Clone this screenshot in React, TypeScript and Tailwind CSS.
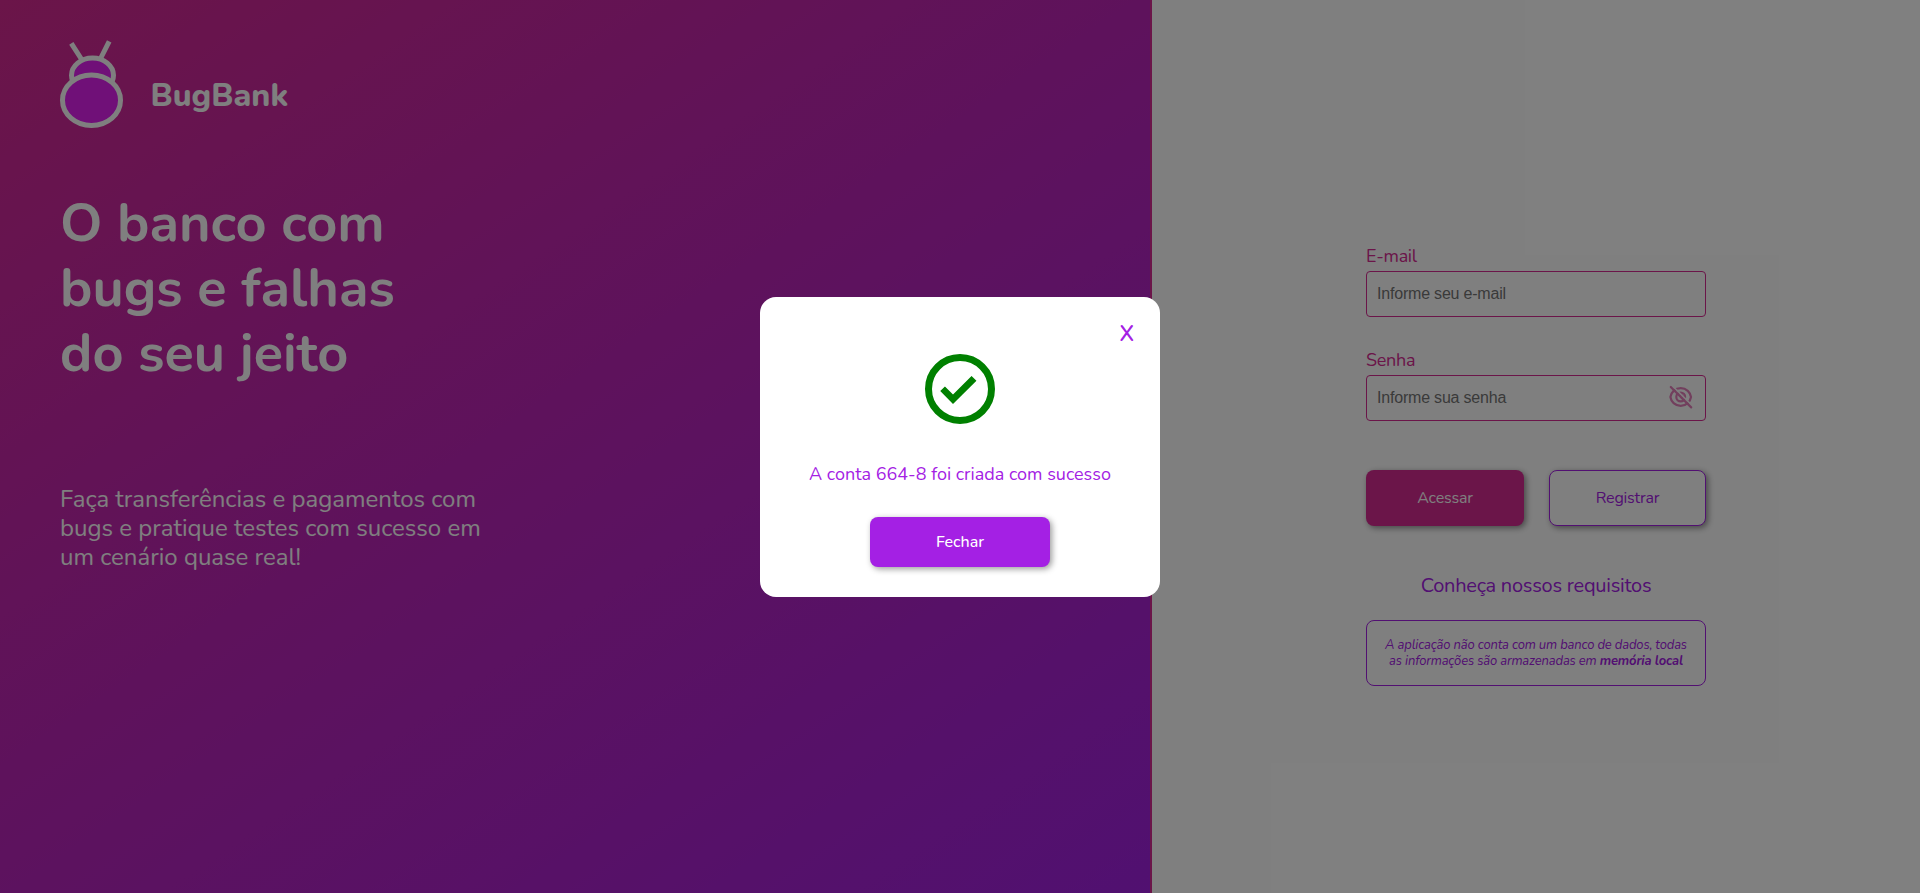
export default function App() {
  return (
    <div className="relative flex h-[893px] w-full overflow-hidden bg-white font-['Nunito',Lato,sans-serif]">
      <section className="flex w-[1152px] shrink-0 flex-col border-r-2 border-[#d62a92] bg-[linear-gradient(146deg,#d62a92_0%,#bd25b8_46%,#a221e2_100%)] px-[60px] pt-10 text-white">
        <div className="flex h-[88px] items-start">
          <svg className="h-[88px] w-16" viewBox="60 40 64 88" fill="none" stroke="white" strokeWidth="5">
            <path d="M71.3 43.3L82 60M109.2 41.3L100.3 59" />
            <ellipse cx="92.5" cy="75.3" rx="21" ry="17.3" fill="#e020f0" />
            <ellipse cx="91.5" cy="100.3" rx="29" ry="25.2" fill="#e020f0" />
          </svg>
          <span className="mt-9 ml-[26.5px] text-[32px] leading-10 font-extrabold">BugBank</span>
        </div>
        <h1 className="mt-[63px] text-[54px] leading-[65px] font-bold">O banco com<br />bugs e falhas<br />do seu jeito</h1>
        <p className="mt-[99px] text-2xl leading-[29px]">Faça transferências e pagamentos com<br />bugs e pratique testes com sucesso em<br />um cenário quase real!</p>
      </section>
      <section className="flex flex-1 flex-col items-center pt-[244px]">
        <form className="flex w-[340px] flex-col">
          <label className="text-lg leading-6 tracking-[-0.3px] text-[#d62a92]">E-mail</label>
          <div className="mt-[3px] flex h-[46px] items-center rounded border border-[#d62a92] px-2.5 font-['Liberation_Sans',sans-serif] text-base tracking-[-0.2px] text-[#757575]">Informe seu e-mail</div>
          <label className="mt-[31px] text-lg leading-6 tracking-[-0.3px] text-[#d62a92]">Senha</label>
          <div className="mt-[3px] flex h-[46px] items-center justify-between rounded border border-[#d62a92] pr-3 pl-2.5 font-['Liberation_Sans',sans-serif] text-base tracking-[-0.2px] text-[#757575]">
            Informe sua senha
            <svg className="mb-0.5 size-[25px]" viewBox="0 0 25 25" fill="none" stroke="#e47fbb" strokeWidth="2.2" strokeLinecap="round">
              <path d="M12.7 3.2C18.5 3.2 22.3 7.4 23 12C22.3 16.6 18.5 20.8 12.7 20.8S3.1 16.6 2.4 12C3.1 7.4 6.9 3.2 12.7 3.2Z" />
              <circle cx="12.7" cy="12" r="4.4" />
              <path d="M12.7 9.8A2.2 2.2 0 0 1 14.9 12" />
              <path d="M4 0.5L25 21.5" stroke="white" strokeWidth="1.6" strokeLinecap="butt" />
              <path d="M2.8 2L23.2 22.4" />
            </svg>
          </div>
          <div className="mt-[49px] flex justify-between text-base tracking-[-0.2px]">
            <button type="button" className="h-14 w-[158px] rounded-lg bg-[#d62a92] text-white shadow-[2px_2px_6px_rgba(0,0,0,0.45)]">Acessar</button>
            <button type="button" className="h-14 w-[157px] rounded-lg border border-[#a420e4] bg-white text-[#a420e4] shadow-[2px_2px_6px_rgba(0,0,0,0.45)]">Registrar</button>
          </div>
          <a className="mt-[46px] text-center text-xl leading-7 tracking-[-0.25px] text-[#a420e4]">Conheça nossos requisitos</a>
          <div className="mt-5 h-[66px] rounded-lg border border-[#a420e4] pt-4 text-center text-[13px] leading-4 tracking-[-0.17px] text-[#a420e4] italic">A aplicação não conta com um banco de dados, todas<br />as informações são armazenadas em <b>memória local</b></div>
        </form>
      </section>
      <div className="absolute inset-0 flex items-center justify-center bg-black/50">
        <div className="flex h-[300px] w-[400px] flex-col items-center rounded-2xl bg-white text-[#a420e4]">
          <button className="mt-[25px] mr-[26px] self-end text-[22px] leading-6 font-semibold">X</button>
          <svg className="mt-[1px] size-[84px]" viewBox="0 0 24 24">
            <circle cx="12" cy="12" r="9" fill="none" stroke="green" strokeWidth="2" />
            <path fill="green" d="M6.35 12.6L7.7 11.3 10 13.6 15.3 8.3 16.7 9.65 10 16.3z" />
          </svg>
          <p className="mt-[31px] text-lg leading-6">A conta 664-8 foi criada com sucesso</p>
          <button className="mt-[31px] h-[50px] w-[180px] rounded-lg bg-[#a420e4] text-base font-medium text-white shadow-[2px_2px_6px_rgba(0,0,0,0.4)]">Fechar</button>
        </div>
      </div>
    </div>
  );
}
